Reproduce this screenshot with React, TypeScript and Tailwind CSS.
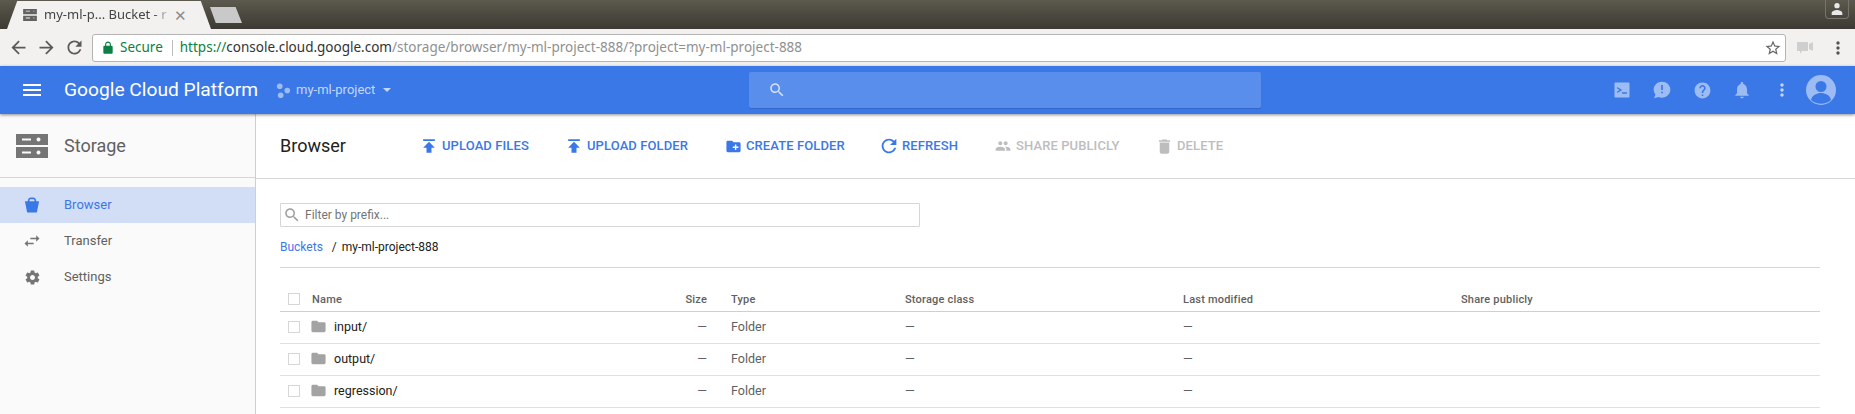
import type { ReactNode } from "react";

const paths = {
  menu: "M3 18h18v-2H3v2zm0-5h18v-2H3v2zm0-7v2h18V6H3z",
  publish: "M5 4v2h14V4H5zm0 10h4v6h6v-6h4l-7-7-7 7z",
  newFolder:
    "M20 6h-8l-2-2H4c-1.11 0-1.99.89-1.99 2L2 18c0 1.11.89 2 2 2h16c1.11 0 2-.89 2-2V8c0-1.11-.89-2-2-2zm-1 8h-3v3h-2v-3h-3v-2h3V9h2v3h3v2z",
  refresh:
    "M17.65 6.35C16.2 4.9 14.21 4 12 4c-4.42 0-7.99 3.58-7.99 8s3.57 8 7.99 8c3.73 0 6.84-2.55 7.73-6h-2.08c-.82 2.33-3.04 4-5.65 4-3.31 0-6-2.69-6-6s2.69-6 6-6c1.66 0 3.14.69 4.22 1.78L13 11h7V4l-2.35 2.35z",
  people:
    "M16 11c1.66 0 2.99-1.34 2.99-3S17.66 5 16 5c-1.66 0-3 1.34-3 3s1.34 3 3 3zm-8 0c1.66 0 2.99-1.34 2.99-3S9.66 5 8 5C6.34 5 5 6.34 5 8s1.34 3 3 3zm0 2c-2.33 0-7 1.17-7 3.5V19h14v-2.5c0-2.33-4.67-3.5-7-3.5zm8 0c-.29 0-.62.02-.97.05 1.16.84 1.97 1.97 1.97 3.45V19h6v-2.5c0-2.33-4.67-3.5-7-3.5z",
  trash: "M6 19c0 1.1.9 2 2 2h8c1.1 0 2-.9 2-2V7H6v12zM19 4h-3.5l-1-1h-5l-1 1H5v2h14V4z",
  search:
    "M15.5 14h-.79l-.28-.27C15.41 12.59 16 11.11 16 9.5 16 5.91 13.09 3 9.5 3S3 5.91 3 9.5 5.91 16 9.5 16c1.61 0 3.09-.59 4.23-1.57l.27.28v.79l5 4.99L20.49 19l-4.99-5zm-6 0C7.01 14 5 11.99 5 9.5S7.01 5 9.5 5 14 7.01 14 9.5 11.99 14 9.5 14z",
  swap: "M6.99 11L3 15l3.99 4v-3H14v-2H6.99v-3zM21 9l-3.99-4v3H10v2h7.01v3L21 9z",
  settings:
    "M19.43 12.98c.04-.32.07-.64.07-.98s-.03-.66-.07-.98l2.11-1.65c.19-.15.24-.42.12-.64l-2-3.46c-.12-.22-.39-.3-.61-.22l-2.49 1c-.52-.4-1.08-.73-1.69-.98l-.38-2.65C14.46 2.18 14.25 2 14 2h-4c-.25 0-.46.18-.49.42l-.38 2.65c-.61.25-1.17.59-1.69.98l-2.49-1c-.23-.09-.49 0-.61.22l-2 3.46c-.13.22-.07.49.12.64l2.11 1.65c-.04.32-.07.65-.07.98s.03.66.07.98l-2.11 1.65c-.19.15-.24.42-.12.64l2 3.46c.12.22.39.3.61.22l2.49-1c.52.4 1.08.73 1.69.98l.38 2.65c.03.24.24.42.49.42h4c.25 0 .46-.18.49-.42l.38-2.65c.61-.25 1.17-.59 1.69-.98l2.49 1c.23.09.49 0 .61-.22l2-3.46c.12-.22.07-.49-.12-.64l-2.11-1.65zM12 15.5c-1.93 0-3.5-1.57-3.5-3.5s1.57-3.5 3.5-3.5 3.5 1.57 3.5 3.5-1.57 3.5-3.5 3.5z",
  folder: "M10 4H4c-1.1 0-1.99.9-1.99 2L2 18c0 1.1.9 2 2 2h16c1.1 0 2-.9 2-2V8c0-1.1-.9-2-2-2h-8l-2-2z",
  help: "M12 2C6.48 2 2 6.48 2 12s4.48 10 10 10 10-4.48 10-10S17.52 2 12 2zm1 17h-2v-2h2v2zm2.07-7.75l-.9.92C13.45 12.9 13 13.5 13 15h-2v-.5c0-1.1.45-2.1 1.17-2.83l1.24-1.26c.37-.36.59-.86.59-1.41 0-1.1-.9-2-2-2s-2 .9-2 2H8c0-2.21 1.79-4 4-4s4 1.79 4 4c0 .88-.36 1.68-.93 2.25z",
  bell: "M12 22c1.1 0 2-.9 2-2h-4c0 1.1.89 2 2 2zm6-6v-5c0-3.07-1.64-5.64-4.5-6.32V4c0-.83-.67-1.5-1.5-1.5s-1.5.67-1.5 1.5v.68C7.63 5.36 6 7.92 6 11v5l-2 2v1h16v-1l-2-2z",
  feedback:
    "M12 2C6.48 2 2 6.2 2 11.5c0 2.2.8 4.2 2.1 5.8L2.6 22l5.2-1.5c1.3.6 2.7.9 4.2.9 5.52 0 10-4.4 10-9.9S17.52 2 12 2zm1 14h-2v-2h2v2zm0-4h-2V6h2v6z",
  back: "M20 11H7.83l5.59-5.59L12 4l-8 8 8 8 1.41-1.41L7.83 13H20v-2z",
  forward: "M12 4l-1.41 1.41L16.17 11H4v2h12.17l-5.58 5.59L12 20l8-8z",
  star: "M22 9.24l-7.19-.62L12 2 9.19 8.63 2 9.24l5.46 4.73L5.82 21 12 17.27 18.18 21l-1.63-7.03L22 9.24zM12 15.4l-3.76 2.27 1-4.28-3.32-2.88 4.38-.38L12 6.1l1.71 4.04 4.38.38-3.32 2.88 1 4.28L12 15.4z",
  lock: "M18 8h-1V6c0-2.76-2.24-5-5-5S7 3.24 7 6v2H6c-1.1 0-2 .9-2 2v10c0 1.1.9 2 2 2h12c1.1 0 2-.9 2-2V10c0-1.1-.9-2-2-2zM15.1 8H8.9V6c0-1.71 1.39-3.1 3.1-3.1s3.1 1.39 3.1 3.1v2z",
  dots: "M12 8c1.1 0 2-.9 2-2s-.9-2-2-2-2 .9-2 2 .9 2 2 2zm0 2c-1.1 0-2 .9-2 2s.9 2 2 2 2-.9 2-2-.9-2-2-2zm0 6c-1.1 0-2 .9-2 2s.9 2 2 2 2-.9 2-2-.9-2-2-2z",
  bucket: "M7 7.5V6.8C7 4.7 8.5 3 10.5 3h3C15.5 3 17 4.7 17 6.8v.7h3.5L18 20c-.2.8-.8 1-1.5 1h-9c-.7 0-1.3-.2-1.5-1L3.5 7.5H7zm2-.9v.9h6v-.9c0-1-.7-1.6-1.6-1.6h-2.8C9.7 5 9 5.6 9 6.6z",
  shell:
    "M3 2h18c.6 0 1 .4 1 1v18c0 .6-.4 1-1 1H3c-.6 0-1-.4-1-1V3c0-.6.4-1 1-1zm2.5 6v2l3.6 2-3.6 2v2l6-3.2v-1.6l-6-3.200zM12 15v2h6.500v-2H12z",
};

function Icon({ d, className }: { d: string; className: string }) {
  return (
    <svg viewBox="0 0 24 24" className={className} fill="currentColor" fillRule="evenodd">
      <path d={d} />
    </svg>
  );
}

function StorageLogo() {
  return (
    <svg viewBox="0 0 32 24" className="h-6 w-8 text-[#757575]" fill="currentColor" fillRule="evenodd">
      <path d="M0 0h32v11H0zM6 4.500v2h9v-2zM22.500 3.500a2 2 0 1 0 .01 0zM0 13h32v11H0zM6 17.500v2h9v-2zM22.500 16.500a2 2 0 1 0 .01 0z" />
    </svg>
  );
}

function ActionButton({
  icon,
  iconSize,
  label,
  width,
  disabled,
}: {
  icon: string;
  iconSize: string;
  label: string;
  width: string;
  disabled?: boolean;
}) {
  return (
    <div className={`flex items-center ${width} ${disabled ? "text-[#bdbdbd]" : "text-[#3b78e7]"}`}>
      <span className="flex w-[26px] shrink-0 justify-center">
        <Icon d={icon} className={iconSize} />
      </span>
      <span className="text-[13px] font-medium tracking-[0.1px]">{label}</span>
    </div>
  );
}

function NavItem({
  icon,
  iconSize,
  label,
  active,
}: {
  icon: string;
  iconSize: string;
  label: string;
  active?: boolean;
}) {
  return (
    <div className={`flex h-9 items-center ${active ? "bg-[#d2def6] text-[#3b78e7]" : "text-[#616161]"}`}>
      <span className="flex w-[64px] shrink-0 justify-center pr-[0px]">
        <Icon d={icon} className={`${iconSize} ${active ? "" : "text-[#757575]"}`} />
      </span>
      <span className="text-[13px]">{label}</span>
    </div>
  );
}

function Row({ name }: { name: string }) {
  return (
    <div className="flex h-8 items-center border-b border-[#e0e0e0] text-[12.5px] text-[#212121]">
      <span className="mb-[2px] ml-[8px] h-3 w-3 border border-[#d6d6d6] bg-white" />
      <Icon d={paths.folder} className="mb-[2px] ml-[10px] h-[17px] w-[17px] text-[#a3a3a3]" />
      <span className="ml-[7px] w-[326px]">{name}</span>
      <span className="w-[47px] text-right text-[#616161]">—</span>
      <span className="ml-[24px] w-[174px] text-[#616161]">Folder</span>
      <span className="w-[278px] text-[#616161]">—</span>
      <span className="text-[#616161]">—</span>
    </div>
  );
}

function TopIcon({ children }: { children: ReactNode }) {
  return <div className="flex w-10 items-center justify-center text-[#9dbcf4]">{children}</div>;
}

export default function App() {
  return (
    <div className="flex h-[414px] w-[1855px] flex-col overflow-hidden bg-white font-['Roboto',sans-serif]">
      {/* browser tab strip */}
      <div className="flex h-[29px] shrink-0 items-start bg-gradient-to-b from-[#5c594e] to-[#3c3a32]">
        <div className="relative ml-[7px] mt-[1px] flex h-[28px] w-[204px] items-center bg-[#f2f1ef] pl-[15px] font-['Noto_Sans',sans-serif] text-[13px] text-[#444] [clip-path:polygon(0_100%,5%_0,95%_0,100%_100%)]">
          <svg viewBox="0 0 16 14" className="mr-[6px] h-[12px] w-[16px] shrink-0 text-[#616161]" fill="currentColor" fillRule="evenodd">
            <path d="M0 0h16v6H0zM3 2v1h5V2zM12 2v1h1V2zM0 8h16v6H0zM3 10v1h5v-1zM12 10v1h1v-1z" />
          </svg>
          <span className="w-[128px] whitespace-nowrap [mask-image:linear-gradient(to_right,black_85%,transparent)]">
            my-ml-p... Bucket - r
          </span>
          <span className="ml-[2px] text-[15px] leading-none text-[#8c8c8c]">✕</span>
        </div>
        <div className="ml-[-1px] mt-[7px] h-[16px] w-[32px] bg-[#c9c9c9] [clip-path:polygon(18%_100%,0_0,80%_0,100%_100%)]" />
        <div className="ml-auto mr-[6px] flex h-[19px] w-[24px] items-center justify-center rounded-b-[4px] border border-t-0 border-[#77756b]">
          <svg viewBox="0 0 24 24" className="h-4 w-4 text-[#e8e8e8]" fill="currentColor">
            <path d="M12 11a4 4 0 1 0 0-8 4 4 0 0 0 0 8zm-8 10v-3c0-2.700 5.300-4.500 8-4.500s8 1.800 8 4.500v3H4z" />
          </svg>
        </div>
      </div>

      {/* browser toolbar */}
      <div className="flex h-[37px] shrink-0 items-center bg-[#f2f1ef]">
        <div className="flex w-[92px] items-center pl-[8px] text-[#5a5a5a]">
          <Icon d={paths.back} className="h-[21px] w-[21px]" />
          <Icon d={paths.forward} className="ml-[7px] h-[21px] w-[21px]" />
          <Icon d={paths.refresh} className="ml-[7px] h-[21px] w-[21px]" />
        </div>
        <div className="flex h-[28px] w-[1694px] items-center rounded-[3px] border border-[#b4b4b4] bg-white font-['Noto_Sans',sans-serif] text-[13.5px]">
          <Icon d={paths.lock} className="ml-[8px] h-[14px] w-[14px] text-[#0b8043]" />
          <span className="ml-[5px] text-[#0b8043]">Secure</span>
          <span className="ml-[9px] h-[16px] w-px bg-[#bdbdbd]" />
          <span className="ml-[7px] text-[#0b8043]">https://</span>
          <span className="text-[#333]">console.cloud.google.com</span>
          <span className="text-[#909090]">/storage/browser/my-ml-project-888/?project=my-ml-project-888</span>
          <Icon d={paths.star} className="ml-auto mr-[3px] h-[18px] w-[18px] text-[#666]" />
        </div>
        <div className="flex flex-1 items-center justify-between pl-[10px] pr-[7px]">
          <svg viewBox="0 0 18 14" className="h-[14px] w-[18px] text-[#cfcfcf]" fill="currentColor" fillRule="evenodd">
            <path d="M1 1h11v9H6l-2 3v-3H1zM13 3l4-2v9l-4-2z" />
          </svg>
          <Icon d={paths.dots} className="h-[20px] w-[20px] text-[#555]" />
        </div>
      </div>

      {/* console header */}
      <div className="relative z-10 flex h-[48px] shrink-0 items-center bg-[#3b78e7] shadow-[0_1px_3px_rgba(0,0,0,0.45)]">
        <Icon d={paths.menu} className="ml-[20px] h-6 w-6 text-white" />
        <span className="ml-[20px] whitespace-nowrap text-[19.2px] text-white">Google Cloud Platform</span>
        <svg viewBox="0 0 16 16" className="ml-[18px] h-[15px] w-[15px] text-[#9dbcf4]" fill="currentColor">
          <circle cx="4" cy="3.500" r="3" />
          <circle cx="12" cy="8" r="3" />
          <circle cx="5" cy="13" r="3" />
        </svg>
        <span className="ml-[5px] text-[13px] text-[#c4d7f8]">my-ml-project</span>
        <span className="ml-[8px] h-0 w-0 border-x-[4px] border-t-[4px] border-x-transparent border-t-[#c4d7f8]" />
        <div className="ml-[358px] flex h-[36px] w-[512px] items-center rounded-[2px] bg-[#5a8eec] pl-[19px] shadow-[0_1px_1px_rgba(0,0,0,0.15)]">
          <Icon d={paths.search} className="h-[18px] w-[18px] text-[#d4e2fa]" />
        </div>
        <div className="ml-auto flex h-full items-stretch pr-[19px]">
          <TopIcon>
            <Icon d={paths.shell} className="h-[18px] w-[18px]" />
          </TopIcon>
          <TopIcon>
            <Icon d={paths.feedback} className="h-[20px] w-[20px]" />
          </TopIcon>
          <TopIcon>
            <Icon d={paths.help} className="h-[19px] w-[19px]" />
          </TopIcon>
          <TopIcon>
            <Icon d={paths.bell} className="h-[20px] w-[20px]" />
          </TopIcon>
          <TopIcon>
            <Icon d={paths.dots} className="h-[20px] w-[20px] text-[#c4d7f8]" />
          </TopIcon>
          <div className="ml-[4px] flex items-center">
            <svg viewBox="0 0 30 30" className="h-[30px] w-[30px]">
              <circle cx="15" cy="15" r="15" fill="#9dbcf4" />
              <circle cx="15" cy="11.500" r="5.500" fill="#3b78e7" />
              <path d="M5 25c1-5 6-7 10-7s9 2 10 7a15 15 0 0 1-20 0z" fill="#3b78e7" />
            </svg>
          </div>
        </div>
      </div>

      <div className="flex min-h-0 flex-1">
        {/* sidebar */}
        <aside className="w-[256px] shrink-0 border-r border-[#cfcfcf] bg-[#fafafa]">
          <div className="flex h-[64px] items-center border-b border-[#d6d6d6] pl-[16px]">
            <StorageLogo />
            <span className="ml-[16px] text-[18px] text-[#616161]">Storage</span>
          </div>
          <div className="pt-[9px]">
            <NavItem icon={paths.bucket} iconSize="h-5 w-5" label="Browser" active />
            <NavItem icon={paths.swap} iconSize="h-5 w-5" label="Transfer" />
            <NavItem icon={paths.settings} iconSize="h-[17px] w-[17px]" label="Settings" />
          </div>
        </aside>

        {/* content */}
        <main className="min-w-0 flex-1">
          <div className="flex h-[65px] items-center border-b border-[#d6d6d6] pl-[24px]">
            <h1 className="w-[136px] pb-[2px] text-[18px] text-[#212121]">Browser</h1>
            <ActionButton icon={paths.publish} iconSize="h-5 w-5" label="UPLOAD FILES" width="w-[145px]" />
            <ActionButton icon={paths.publish} iconSize="h-5 w-5" label="UPLOAD FOLDER" width="w-[159px]" />
            <ActionButton icon={paths.newFolder} iconSize="h-[17px] w-[17px]" label="CREATE FOLDER" width="w-[156px]" />
            <ActionButton icon={paths.refresh} iconSize="h-[22px] w-[22px]" label="REFRESH" width="w-[114px]" />
            <ActionButton icon={paths.people} iconSize="h-[16px] w-[16px]" label="SHARE PUBLICLY" width="w-[161px]" disabled />
            <ActionButton icon={paths.trash} iconSize="h-[19px] w-[19px]" label="DELETE" width="w-[90px]" disabled />
          </div>
          <div className="w-[1564px] pl-[24px]">
            <div className="mt-[24px] flex h-[24px] w-[640px] items-center rounded-[1px] border border-[#d6d6d6] pl-[2px] text-[12px] text-[#757575]">
              <Icon d={paths.search} className="h-[18px] w-[18px] text-[#9e9e9e]" />
              <span className="ml-[4px]">Filter by prefix...</span>
            </div>
            <div className="mt-[12px] flex h-[16px] items-center text-[12px]">
              <span className="text-[#3b78e7]">Buckets</span>
              <span className="ml-[9px] text-[#212121]">/</span>
              <span className="ml-[5px] text-[#212121]">my-ml-project-888</span>
            </div>
            <div className="mt-[12px] border-b border-[#d6d6d6]" />
            <div className="mt-[24px] flex h-[20px] items-center border-b border-[#cfcfcf] pb-[2px] text-[11px] font-medium tracking-[0.2px] text-[#616161]">
              <span className="mb-[3px] ml-[8px] h-3 w-3 border border-[#d6d6d6] bg-white" />
              <span className="ml-[12px] w-[300px]">Name</span>
              <span className="ml-[48px] w-[47px] text-right">Size</span>
              <span className="ml-[24px] w-[174px]">Type</span>
              <span className="w-[278px]">Storage class</span>
              <span className="w-[278px]">Last modified</span>
              <span>Share publicly</span>
            </div>
            <Row name="input/" />
            <Row name="output/" />
            <Row name="regression/" />
          </div>
        </main>
      </div>
    </div>
  );
}
